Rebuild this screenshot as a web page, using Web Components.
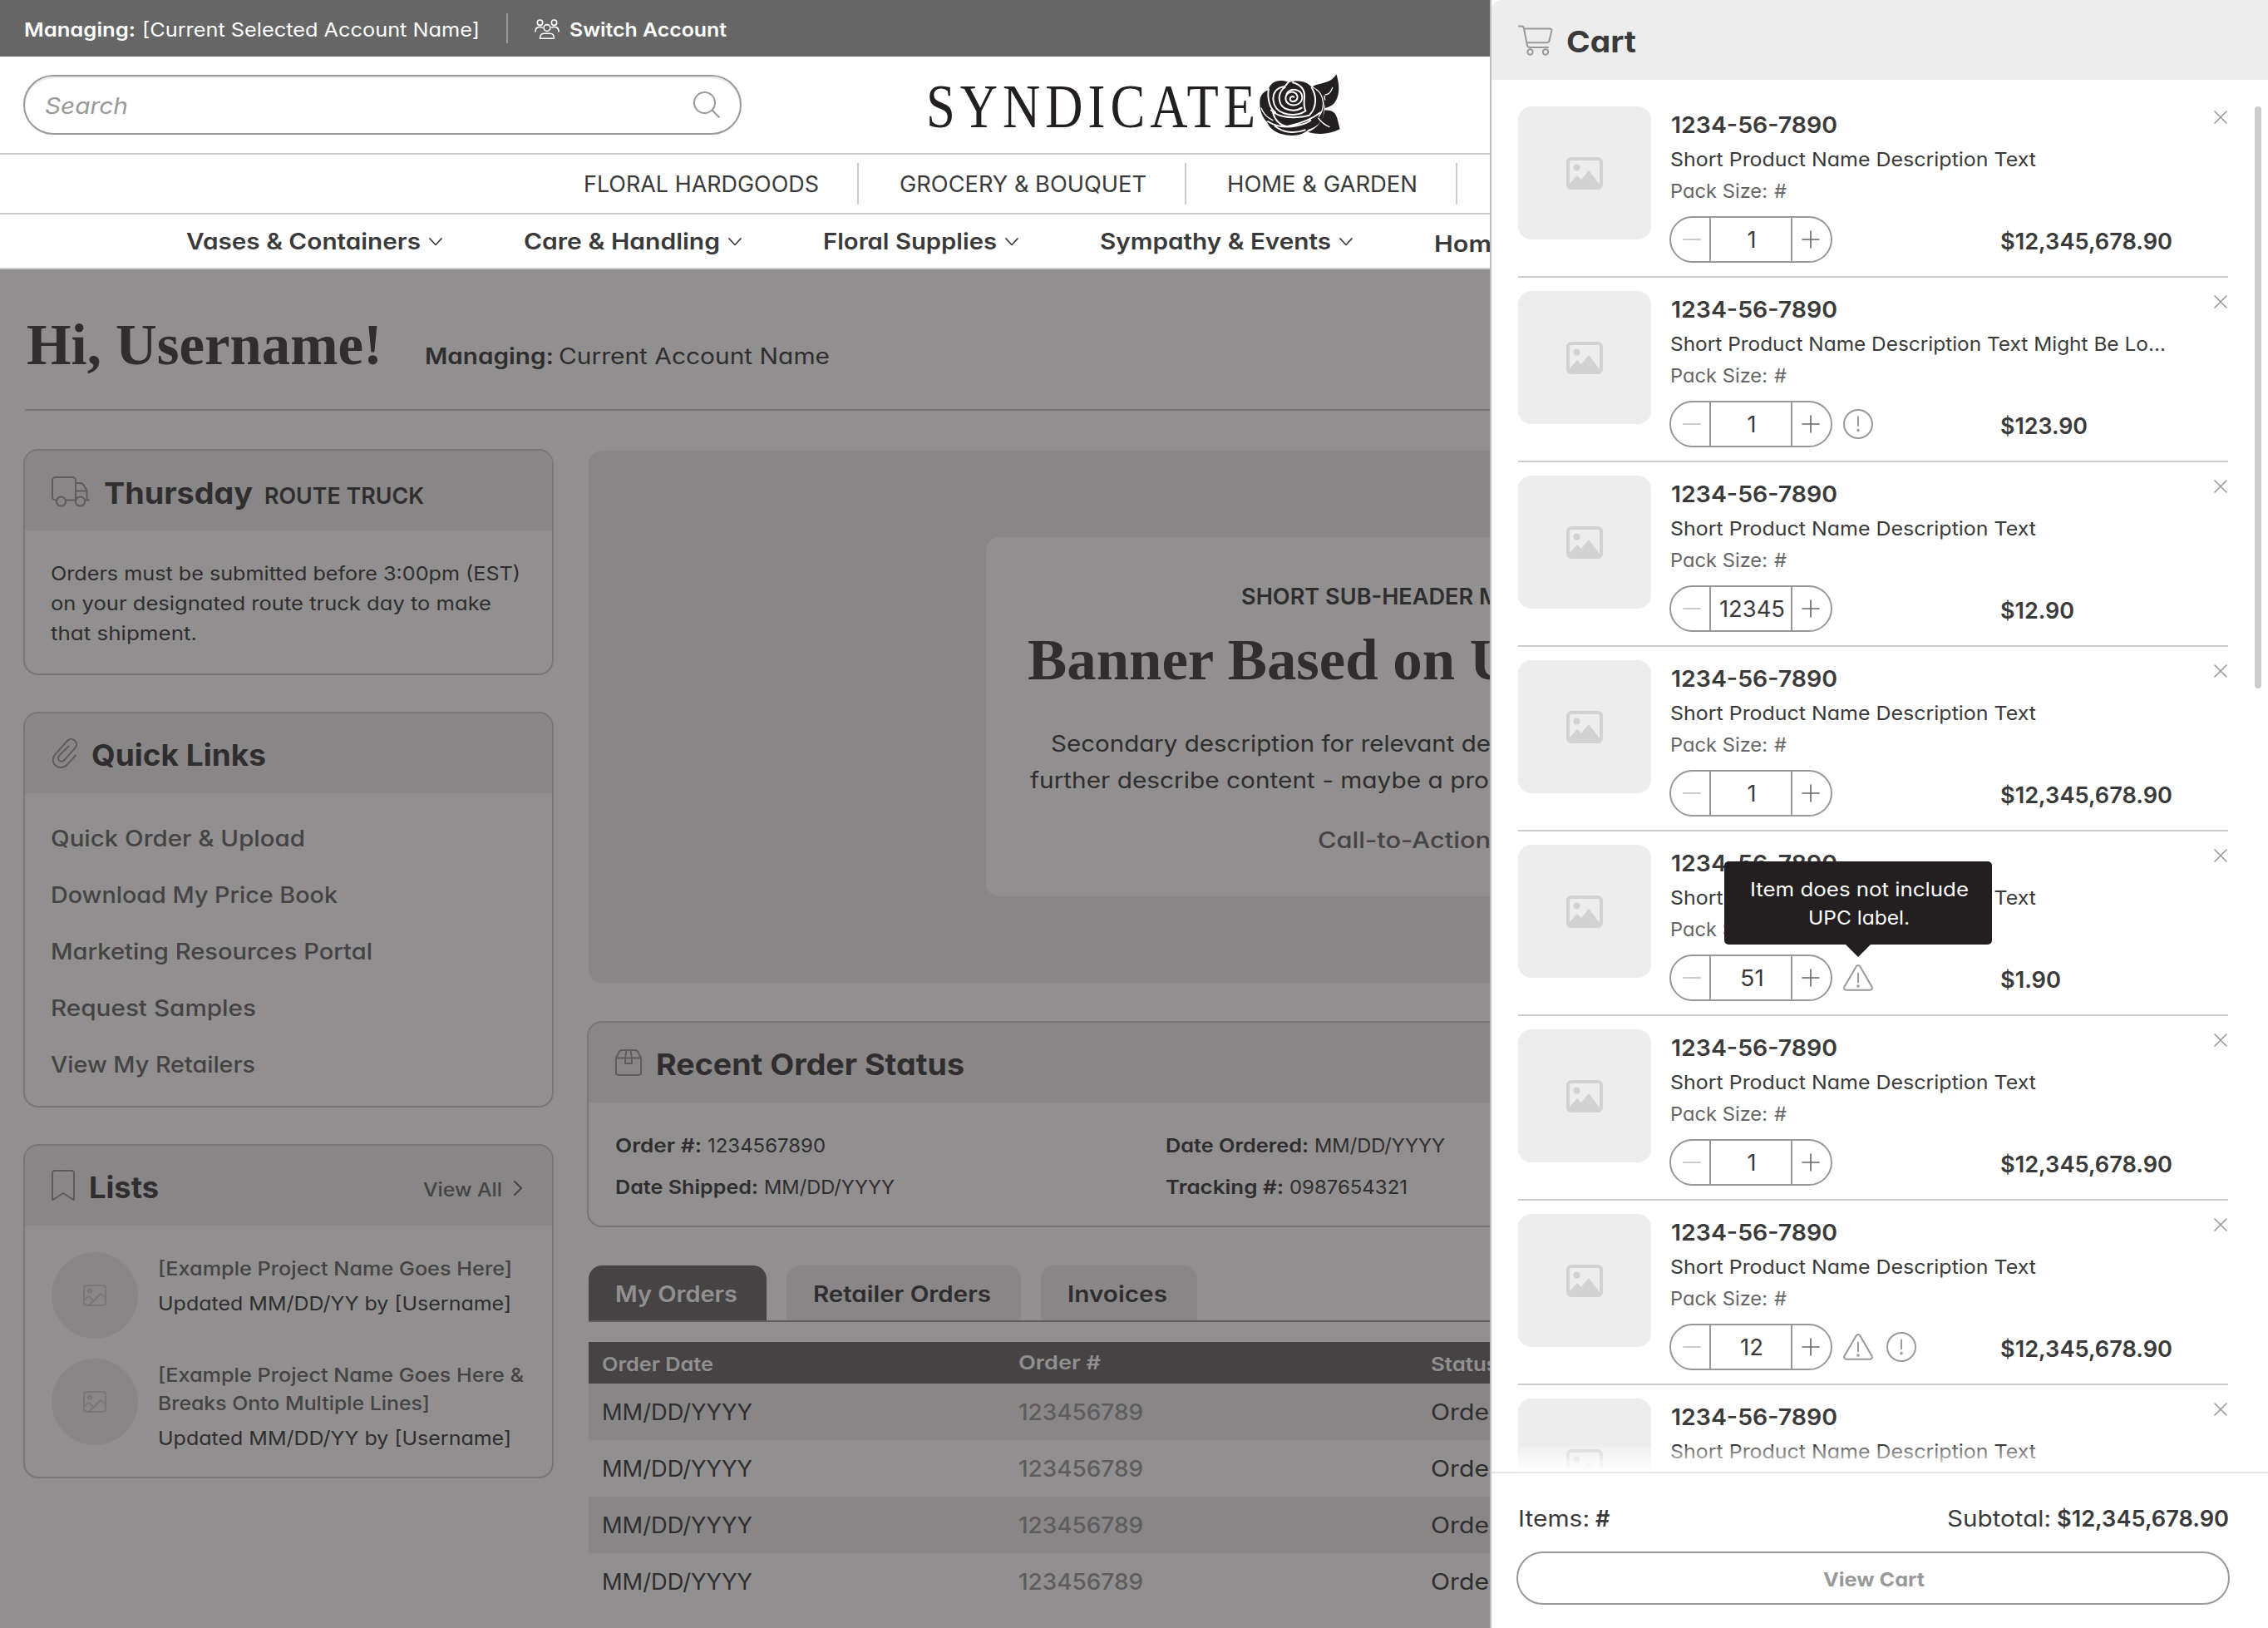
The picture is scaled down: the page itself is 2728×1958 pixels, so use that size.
<!DOCTYPE html>
<html lang="en">
<head>
  <meta charset="utf-8">
  <title>Syndicate - Dashboard</title>
  <style>
    body {
      margin: 0;
      width: 2728px;
      height: 1958px;
      overflow: hidden;
      position: relative;
      background: #fff;
      color: #3a3a3a;
      font-family: Inter, "Open Sans", "Liberation Sans", sans-serif;
      font-size: 27px;
      font-feature-settings: "cv11";
    }
  </style>
</head>
<body>
  <top-bar></top-bar>
  <site-header></site-header>
  <dash-board></dash-board>
  <cart-drawer></cart-drawer>

  <script>
    const ICONS = {
      people: ['0 0 30 24', '<circle cx="6.5" cy="4.2" r="3.2"/><circle cx="23.5" cy="4.2" r="3.2"/><circle cx="15" cy="10.5" r="3.9"/><path d="M1 15c0-3.500 2.200-5.600 5.500-5.600 1 0 2 .2 2.700.600M29 15c0-3.500-2.200-5.600-5.500-5.600-1 0-2 .2-2.700.600M6.500 23.200c0-4 2-6 5-6h7c3 0 5 2 5 6z"/>'],
      search: ['0 0 32 32', '<circle cx="13.500" cy="13.500" r="12.500"/><path d="M22.500 22.500 31 31"/>'],
      down: ['0 0 18 11', '<path d="M1 1l8 8.500L17 1"/>'],
      right: ['0 0 10 18', '<path d="M1 1l8 8-8 8"/>'],
      close: ['0 0 16 16', '<path d="M1 1l14 14M15 1 1 15"/>'],
      plus: ['0 0 20 20', '<path d="M10 0v20M0 10h20"/>'],
      minus: ['0 0 20 20', '<path d="M0 10h20"/>'],
      truck: ['0 0 46 37', '<path d="M6.500 28.500H5a4 4 0 0 1-4-4V5a4 4 0 0 1 4-4h20a4 4 0 0 1 4 4v23.500M17 28.500h12.500M29 8h5.500c2 0 3.300 1 4.200 2.600L42.500 17v11.500M29 17.500h13.500M40 28.500h5"/><circle cx="11.500" cy="30" r="5.600"/><circle cx="34.500" cy="30" r="5.600"/>'],
      clip: ['0 0 31 36', '<path d="M29 20.500 19 31.500c-4 4.300-10 4.600-14 1.300s-4.500-9-1-13L18.500 3.500c2.600-2.800 6.500-3.300 9.300-1s3 6 .6 9L15.500 26c-1.600 1.900-4.200 2.200-6 .7s-2-4-.4-5.900L20.500 9.500"/>'],
      bookmark: ['0 0 28 38', '<path d="M4 1h20a3 3 0 0 1 3 3v32.500L14 28 1 36.500V4a3 3 0 0 1 3-3z"/>'],
      box: ['0 0 32 32', '<path d="M1 10.500 4.500 3.500C5.300 1.800 6.500 1 8 1h16c1.500 0 2.700.8 3.500 2.500l3.500 7V28a3 3 0 0 1-3 3H4a3 3 0 0 1-3-3zM1 10.500h30M13.500 1 12 10.500V17h8v-6.500L18.500 1"/>'],
      cart: ['0 0 42 38', '<path d="M1 2.500h3.500c1.500 0 2 .7 2.300 2L11 25.500c.4 1.800 1.300 2.500 3 2.500h22M7.500 5.500H38c2 0 2.700 1 2.300 2.700L37.500 20c-.4 1.600-1.300 2.300-3 2.300H10.500"/><circle cx="14.500" cy="33.500" r="3.200"/><circle cx="33" cy="33.500" r="3.200"/>'],
      picture: ['0 0 28 26', '<rect x="1" y="1" width="26" height="24" rx="3"/><circle cx="8" cy="7.500" r="2"/><path d="M1 19l5.500-5 6 5M7 25l14-14 6 5.500"/>'],
      thumb: ['0 0 44 39', '<g stroke="none" fill="currentColor"><path fill-rule="evenodd" d="M6 0h32a6 6 0 0 1 6 6v27a6 6 0 0 1-6 6H6a6 6 0 0 1-6-6V6a6 6 0 0 1 6-6zm0 4a2 2 0 0 0-2 2v26l9-10 5 5 9-11 13 17V6a2 2 0 0 0-2-2z"/><circle cx="12.500" cy="12.500" r="4"/></g>'],
      circle: ['0 0 36 36', '<circle cx="18" cy="18" r="17"/><path d="M18 9.500V20"/><circle cx="18" cy="25.500" r=".8"/>'],
      triangle: ['0 0 36 32', '<path d="M15.800 2.300c1-1.700 3.400-1.700 4.400 0l14.300 24.400c1.100 2-.1 4-2.300 4H3.800c-2.200 0-3.400-2-2.300-4z"/><path d="M18 10.500v11"/><circle cx="18" cy="26" r=".8"/>']
    };

    class UiIcon extends HTMLElement {
      connectedCallback() {
        const [box, shape] = ICONS[this.getAttribute('name')];
        const size = box.split(' ');
        const w = this.getAttribute('w') || size[2];
        this.attachShadow({ mode: 'open' }).innerHTML = `
          <style>
            :host { display: block; flex: none; width: ${w}px; color: #999; }
            svg { display: block; width: 100%; overflow: visible; }
          </style>
          <svg viewBox="${box}" fill="none" stroke="currentColor" stroke-width="${this.getAttribute('stroke') || 2}"
            stroke-linecap="round" stroke-linejoin="round">${shape}</svg>`;
      }
    }

    // One line of text, stretched so that it takes up "w" pixels
    class FitText extends HTMLElement {
      connectedCallback() {
        this.attachShadow({ mode: 'open' }).innerHTML = `
          <style>
            :host { display: block; flex: none; white-space: nowrap; }
            span { display: inline-block; transform-origin: 0 50%; }
          </style>
          <span><slot></slot></span>`;
        const span = this.shadowRoot.querySelector('span');
        const target = Number(this.getAttribute('w')) + 3;
        const natural = span.getBoundingClientRect().width;
        const scale = this.textContent.length > 1 ? target / natural : 1;
        span.style.transform = `translate(1px, 1px) scaleX(${scale})`;
        this.style.width = (scale === 1 ? natural : target) + 'px';
      }
    }

    class TopBar extends HTMLElement {
      constructor() {
        super();
        this.attachShadow({ mode: 'open' }).innerHTML = `
          <style>
            :host {
              display: flex;
              align-items: center;
              height: 68px;
              padding-left: 28px;
              background: #666;
              color: #fff;
              font-size: 23.5px;
              line-height: 36px;
            }
            fit-text { margin-top: 2px; }
            .bold { font-weight: 600; }
            .current { margin-left: 8px; }
            i { width: 2px; height: 36px; margin: 0 32px 0 33px; background: #999; }
            ui-icon { color: #fff; margin: 2px 11px 0 0; }
          </style>
          <fit-text class="bold" w="131">Managing:</fit-text>
          <fit-text class="current" w="403">[Current Selected Account Name]</fit-text>
          <i></i>
          <ui-icon name="people" stroke="1.6"></ui-icon>
          <fit-text class="bold" w="186">Switch Account</fit-text>`;
      }
    }

    class SearchBox extends HTMLElement {
      constructor() {
        super();
        this.attachShadow({ mode: 'open' }).innerHTML = `
          <style>
            :host {
              box-sizing: border-box;
              display: flex;
              align-items: center;
              justify-content: space-between;
              width: 864px;
              height: 72px;
              padding: 0 24px 0 23px;
              border: 2px solid #999;
              border-radius: 36px;
              box-shadow: inset 0 2px 2px rgba(0, 0, 0, .1);
              color: #999;
              font-style: italic;
            }
          </style>
          <fit-text w="97">Search</fit-text>
          <ui-icon name="search"></ui-icon>`;
      }
    }

    class BrandLogo extends HTMLElement {
      constructor() {
        super();
        this.attachShadow({ mode: 'open' }).innerHTML = `
          <style>
            :host { display: flex; color: #231f20; }
            fit-text { font: 73px/96px "Liberation Serif", serif; letter-spacing: 7px; }
            svg { display: block; width: 120px; height: 90px; margin-left: -10px; }
          </style>
          <fit-text w="399">SYNDICATE</fit-text>
          <svg viewBox="0 0 360 270">
            <g fill="currentColor">
              <path d="M222 72c20-14 66-8 85-45 11 34 14 72-3 99-8 13-20 20-37 24-4-30-16-60-45-78z"/>
              <path d="M264 158c27-3 42 9 47 32l9 36c-38 20-80 20-115 11 36-17 55-43 59-79z"/>
              <path d="M31 130c0-25 12-39 31-45 6-28 35-43 74-28 31-10 68-4 83 19 38 12 50 50 42 90 0 34-28 55-56 62-20 22-60 26-97 15-26-8-45-24-50-42-19-17-27-42-27-71z"/>
            </g>
            <g fill="none" stroke="#fff" stroke-width="6" stroke-linecap="round">
              <path d="M63 82c-5 26 0 66 24 84M136 55c-10 8-8 14-18 18-28 4-42 24-38 50 3 24 16 38 36 45 28 10 62 7 80-8"/>
              <path d="M122 75c-20 12-26 38-16 60 12 24 54 30 76 14M150 58c30 8 44 26 42 54-2 16-4 30 4 48M128 98c14-24 54-18 56 12 1 22-24 36-46 26-20-10-18-38 4-44 16-2 28 10 24 24-4 12-24 14-26 2 0-8 8-12 14-8"/>
              <path d="M218 76c18 30 20 70-8 100-24 8-64 10-94 4-20-4-34-12-44-22M78 164c8 34 30 50 52 52 40-8 84-22 120-50M60 198c30 20 64 24 104 16 20-6 40-8 50-20"/>
              <path d="M234 82c30 22 34 66 10 98M268 102c12-2 20-8 25-26M266 120l-2-14M242 186c10 14 22 24 40 32M36 150c8 20 20 34 42 44" stroke-width="4"/>
              <path d="M86 215c30 24 70 28 108 14"/>
            </g>
          </svg>`;
      }
    }

    class SiteHeader extends HTMLElement {
      constructor() {
        super();
        const menu = [['Vases &amp; Containers', 279], ['Care &amp; Handling', 233], ['Floral Supplies', 206], ['Sympathy &amp; Events', 275]];
        this.attachShadow({ mode: 'open' }).innerHTML = `
          <style>
            :host { display: block; height: 256px; }
            .row { box-sizing: border-box; display: flex; border-bottom: 2px solid #ccc; overflow: hidden; }
            .brand { height: 118px; padding: 22px 0 0 28px; }
            brand-logo { margin: -10px 0 0 221px; }
            .links { height: 72px; align-items: center; padding-left: 701px; line-height: 70px; }
            .links i { width: 2px; height: 50px; margin: 0 48px 0 47px; background: #ccc; }
            .menu { height: 66px; padding-left: 223px; gap: 97px; line-height: 70px; font-weight: 600; }
            .menu div { display: flex; align-items: center; gap: 11px; }
            .menu ui-icon { color: #3a3a3a; margin-top: 2px; }
          </style>
          <div class="row brand"><search-box></search-box><brand-logo></brand-logo></div>
          <div class="row links">
            <fit-text w="280">FLORAL HARDGOODS</fit-text><i></i>
            <fit-text w="294">GROCERY &amp; BOUQUET</fit-text><i></i>
            <fit-text w="226">HOME &amp; GARDEN</fit-text><i></i>
          </div>
          <div class="row menu">
            ${menu.map(([name, w]) => `<div><fit-text w="${w}">${name}</fit-text><ui-icon name="down" w="16" stroke="1.8"></ui-icon></div>`).join('')}
            <fit-text w="66">Hom</fit-text>
          </div>`;
      }
    }

    class InfoCard extends HTMLElement {
      constructor() {
        super();
        this.attachShadow({ mode: 'open' }).innerHTML = `
          <style>
            :host {
              box-sizing: border-box;
              display: block;
              border: 2px solid #ccc;
              border-radius: 18px;
              overflow: hidden;
            }
            header {
              box-sizing: border-box;
              display: flex;
              align-items: center;
              height: 96px;
              padding: var(--shift, 3px) 34px 0 32px;
              background: #ededed;
              font-size: 35.5px;
              font-weight: 700;
              line-height: 50px;
            }
            ui-icon { margin: 0 16px 4px 0; }
          </style>
          <header>
            <ui-icon name="${this.getAttribute('icon')}"></ui-icon>
            <slot name="title"></slot>
          </header>
          <slot></slot>`;
      }
    }

    class ListEntry extends HTMLElement {
      constructor() {
        super();
        this.attachShadow({ mode: 'open' }).innerHTML = `
          <style>
            :host { display: flex; height: 104px; gap: 23px; font-size: 23.5px; line-height: 34px; }
            .pic {
              display: flex;
              flex: none;
              align-items: center;
              justify-content: center;
              width: 104px;
              height: 104px;
              border-radius: 50%;
              background: #ededed;
            }
            .pic ui-icon { color: #ccc; }
            .name { padding-top: 2px; margin-bottom: 8px; color: #666; font-weight: 500; }
          </style>
          <div class="pic"><ui-icon name="picture"></ui-icon></div>
          <div>
            <div class="name"><slot></slot></div>
            <fit-text w="422">Updated MM/DD/YY by [Username]</fit-text>
          </div>`;
      }
    }

    class OrderTable extends HTMLElement {
      constructor() {
        super();
        const row = `<div class="row">
            <fit-text w="178">MM/DD/YYYY</fit-text>
            <fit-text class="num" w="147">123456789</fit-text>
            <fit-text w="67">Orde</fit-text>
          </div>`;
        this.attachShadow({ mode: 'open' }).innerHTML = `
          <style>
            :host { display: block; }
            .row, .head { display: grid; grid-template-columns: 501px 496px 1fr; padding-left: 15px; line-height: 68px; }
            .head { height: 50px; line-height: 52px; background: #666; color: #fff; font-size: 23.5px; font-weight: 600; }
            .head .up { line-height: 48px; }
            .row:nth-child(odd) { background: #ededed; }
            .num { color: #999; font-weight: 500; }
          </style>
          <div class="head">
            <fit-text w="131">Order Date</fit-text>
            <fit-text class="up" w="96">Order #</fit-text>
            <fit-text w="78">Status</fit-text>
          </div>
          ${row.repeat(4)}`;
      }
    }

    class DashBoard extends HTMLElement {
      constructor() {
        super();
        this.attachShadow({ mode: 'open' }).innerHTML = `
          <style>
            :host { box-sizing: border-box; display: block; position: relative; height: 1634px; padding-left: 28px; }
            .greeting {
              box-sizing: border-box;
              display: flex;
              align-items: baseline;
              height: 170px;
              padding: 13px 0 0 1px;
              margin-left: 2px;
              border-bottom: 2px solid #ccc;
              line-height: 40px;
            }
            .greeting .hi { font: bold 69px/154px "Liberation Serif", serif; margin-right: 51px; }
            .semi { font-weight: 600; }
            .medium { font-weight: 500; }
            .columns { display: grid; grid-template-columns: 638px 1994px; gap: 40px; padding-top: 46px; }
            .left { display: flex; flex-direction: column; gap: 44px; }
            .route { height: 272px; --shift: 6px; }
            .route p { margin: 33px 0 0 30px; font-size: 23.5px; line-height: 36px; }
            .sub { font-size: 27px; margin: 5px 0 0 14px; }
            .quick { height: 476px; }
            .quick div { padding: 20px 0 0 30px; color: #666; font-weight: 500; line-height: 68px; }
            .lists { height: 402px; }
            .lists .all { margin-left: auto; font-size: 23.5px; font-weight: 500; color: #666; padding-top: 4px; }
            .lists .go { color: #666; margin: 2px 2px 0 15px; }
            .entries { display: flex; flex-direction: column; gap: 24px; padding: 32px 0 0 32px; }
            .banner {
              box-sizing: border-box;
              height: 640px;
              margin: 2px 0 46px 2px;
              padding: 104px 0 0 478px;
              border-radius: 16px;
              background: #ededed;
            }
            .panel { box-sizing: border-box; width: 1036px; height: 432px; padding-top: 50px; border-radius: 16px; background: #fff; line-height: 44px; }
            .panel .title { font: bold 69px/90px "Liberation Serif", serif; margin: 9px 0 34px 49px; }
            .panel .cta { margin: 28px 0 0 398px; color: #666; font-weight: 500; }
            .status { height: 248px; }
            .facts { display: grid; grid-template-columns: 662px 1fr; padding: 26px 0 0 31px; font-size: 23.5px; line-height: 50px; }
            .facts div { display: flex; gap: 7px; }
            .tabs { display: flex; gap: 24px; margin: 46px 0 24px 2px; border-bottom: 2px solid #999; font-weight: 600; line-height: 68px; }
            .tabs div { box-sizing: border-box; height: 66px; padding-left: 31px; border-radius: 16px 16px 0 0; background: #ededed; }
            .tabs .on { background: #666; color: #fff; }
            order-table { margin-left: 2px; }
            .shade { position: absolute; inset: 0; background: rgba(35, 31, 32, .5); }
          </style>
          <div class="greeting">
            <fit-text class="hi" w="425">Hi, Username!</fit-text>
            <fit-text class="semi" w="152">Managing:</fit-text>
            <fit-text style="margin-left:6px" w="323">Current Account Name</fit-text>
          </div>
          <div class="columns">
            <div class="left">
              <info-card class="route" icon="truck">
                <fit-text slot="title" w="176">Thursday</fit-text>
                <fit-text slot="title" class="sub semi" w="189">ROUTE TRUCK</fit-text>
                <p>
                  <fit-text w="562">Orders must be submitted before 3:00pm (EST)</fit-text>
                  <fit-text w="527">on your designated route truck day to make</fit-text>
                  <fit-text w="173">that shipment.</fit-text>
                </p>
              </info-card>
              <info-card class="quick" icon="clip">
                <fit-text slot="title" w="207">Quick Links</fit-text>
                <div>
                  <fit-text w="303">Quick Order &amp; Upload</fit-text>
                  <fit-text w="342">Download My Price Book</fit-text>
                  <fit-text w="384">Marketing Resources Portal</fit-text>
                  <fit-text w="244">Request Samples</fit-text>
                  <fit-text w="243">View My Retailers</fit-text>
                </div>
              </info-card>
              <info-card class="lists" icon="bookmark">
                <fit-text slot="title" w="81">Lists</fit-text>
                <fit-text slot="title" class="all" w="92">View All</fit-text>
                <ui-icon slot="title" class="go" name="right"></ui-icon>
                <div class="entries">
                  <list-entry><fit-text w="423">[Example Project Name Goes Here]</fit-text></list-entry>
                  <list-entry>
                    <fit-text w="437">[Example Project Name Goes Here &amp;</fit-text>
                    <fit-text w="324">Breaks Onto Multiple Lines]</fit-text>
                  </list-entry>
                </div>
              </info-card>
            </div>
            <div class="right">
              <div class="banner">
                <div class="panel">
                  <fit-text class="semi" style="margin:-1px 0 0 306px" w="308">SHORT SUB-HEADER M</fit-text>
                  <fit-text class="title" w="580">Banner Based on U</fit-text>
                  <fit-text style="margin-left:77px" w="526">Secondary description for relevant de</fit-text>
                  <fit-text style="margin-left:52px" w="549">further describe content - maybe a pro</fit-text>
                  <fit-text class="cta" w="205">Call-to-Action</fit-text>
                </div>
              </div>
              <info-card class="status" icon="box">
                <fit-text slot="title" w="368">Recent Order Status</fit-text>
                <div class="facts">
                  <div><fit-text class="semi" w="101">Order #:</fit-text><fit-text w="139">1234567890</fit-text></div>
                  <div><fit-text class="semi" w="169">Date Ordered:</fit-text><fit-text w="154">MM/DD/YYYY</fit-text></div>
                  <div><fit-text class="semi" w="169">Date Shipped:</fit-text><fit-text w="154">MM/DD/YYYY</fit-text></div>
                  <div><fit-text class="semi" w="139">Tracking #:</fit-text><fit-text w="139">0987654321</fit-text></div>
                </div>
              </info-card>
              <div class="tabs">
                <div class="on" style="width:214px"><fit-text w="144">My Orders</fit-text></div>
                <div style="width:282px"><fit-text w="211">Retailer Orders</fit-text></div>
                <div style="width:188px"><fit-text w="117">Invoices</fit-text></div>
              </div>
              <order-table></order-table>
            </div>
          </div>
          <div class="shade"></div>`;
      }
    }

    class QtyStepper extends HTMLElement {
      connectedCallback() {
        this.attachShadow({ mode: 'open' }).innerHTML = `
          <style>
            :host {
              box-sizing: border-box;
              display: grid;
              grid-template-columns: 46px 1fr 46px;
              width: 196px;
              height: 56px;
              border: 2px solid #999;
              border-radius: 28px;
              line-height: 52px;
            }
            div { display: flex; align-items: center; justify-content: center; }
            .qty { border: solid #999; border-width: 0 2px; }
            .less { color: #ccc; padding-left: 3px; }
            .more { color: #666; padding-right: 2px; }
          </style>
          <div><ui-icon class="less" name="minus"></ui-icon></div>
          <div class="qty"><slot></slot></div>
          <div><ui-icon class="more" name="plus" stroke="1.6"></ui-icon></div>`;
      }
    }

    class ToolTip extends HTMLElement {
      constructor() {
        super();
        this.attachShadow({ mode: 'open' }).innerHTML = `
          <style>
            :host {
              box-sizing: border-box;
              display: flex;
              flex-direction: column;
              align-items: center;
              position: absolute;
              z-index: 2;
              left: -143px;
              bottom: 56px;
              width: 322px;
              height: 100px;
              padding-top: 16px;
              border-radius: 5px;
              background: #231f20;
              color: #fff;
              font-size: 23.5px;
              line-height: 34px;
            }
            :host::after {
              content: "";
              position: absolute;
              top: 99px;
              left: 145px;
              border: 16px solid transparent;
              border-top-color: #231f20;
              border-bottom: 0;
            }
          </style>
          <slot></slot>`;
      }
    }

    class CartItem extends HTMLElement {
      connectedCallback() {
        const get = (name) => this.getAttribute(name);
        const flags = (get('flags') || '').split(' ').filter(Boolean);
        const more = this.hasAttribute('long');
        this.attachShadow({ mode: 'open' }).innerHTML = `
          <style>
            :host {
              box-sizing: border-box;
              display: grid;
              grid-template-columns: 160px 1fr 16px;
              flex: none;
              gap: 22px;
              height: 222px;
              padding-top: 16px;
              border-bottom: 2px solid #ccc;
            }
            .pic { display: flex; align-items: center; justify-content: center; height: 160px; border-radius: 16px; background: #ededed; }
            .pic ui-icon { color: #d2d2d2; }
            .sku { margin-left: 1px; font-weight: 600; line-height: 44px; }
            .line { display: flex; gap: 8px; font-size: 23.5px; line-height: 38px; }
            .pack { color: #666; }
            .buy { display: flex; align-items: center; width: 397px; height: 56px; margin-top: 12px; }
            .flag { position: relative; margin-left: 13px; }
            .flag + .flag { margin-left: 16px; }
            .price { font-weight: 600; }
            .row { display: flex; align-items: center; }
            .row .price { margin-top: 14px; }
            .x { margin: 5px 0 0 -1px; }
          </style>
          <div class="pic"><ui-icon name="thumb"></ui-icon></div>
          <div>
            <fit-text class="sku" w="197">1234-56-7890</fit-text>
            <div class="line"><fit-text w="${more ? 593 : 437}">Short Product Name Description Text${more ? ' Might Be Lo...' : ''}</fit-text></div>
            <div class="line pack"><fit-text w="114">Pack Size:</fit-text><fit-text w="17">#</fit-text></div>
            <div class="row">
              <div class="buy">
                <qty-stepper><fit-text w="${get('qw')}">${get('qty')}</fit-text></qty-stepper>
                ${flags.map((flag) => `<div class="flag"><ui-icon name="${flag}"></ui-icon>${flag === 'triangle' ? '<slot></slot>' : ''}</div>`).join('')}
              </div>
              <fit-text class="price" w="${get('pw')}">${get('price')}</fit-text>
            </div>
          </div>
          <ui-icon class="x" name="close" stroke="1.600"></ui-icon>`;
      }
    }

    class CartDrawer extends HTMLElement {
      constructor() {
        super();
        const big = 'qty="1" qw="7" price="$12,345,678.90" pw="204"';
        this.attachShadow({ mode: 'open' }).innerHTML = `
          <style>
            :host {
              box-sizing: border-box;
              display: flex;
              flex-direction: column;
              position: absolute;
              top: 0;
              right: 0;
              width: 936px;
              height: 1958px;
              border-left: 2px solid #bfbfbf;
              background: #fff;
            }
            header {
              display: flex;
              flex: none;
              align-items: center;
              height: 96px;
              padding-left: 32px;
              border-top-left-radius: 12px;
              background: #ededed;
              font-size: 35.5px;
              font-weight: 700;
            }
            header fit-text { margin: 2px 0 0 15px; }
            .list {
              display: flex;
              flex-direction: column;
              position: relative;
              height: 1658px;
              padding: 16px 48px 0 32px;
              overflow: hidden;
            }
            .bar { position: absolute; top: 32px; right: 8px; width: 8px; height: 700px; border-radius: 4px; background: #ccc; }
            .fade { position: absolute; left: 0; right: 0; bottom: 0; height: 30px; background: linear-gradient(rgba(255, 255, 255, .2), #fff); }
            footer { box-sizing: border-box; flex: none; height: 188px; padding: 33px 46px 0 30px; border-top: 2px solid #e6e6e6; }
            .sum { display: flex; gap: 7px; padding: 1px 2px 0 1px; line-height: 40px; }
            .sum b { font-weight: 600; }
            .sub { margin-left: auto; }
            .view {
              box-sizing: border-box;
              display: flex;
              align-items: center;
              justify-content: center;
              height: 64px;
              margin-top: 20px;
              border: 2px solid #999;
              border-radius: 32px;
              color: #999;
              font-size: 23.5px;
              font-weight: 700;
            }
          </style>
          <header><ui-icon name="cart"></ui-icon><fit-text w="81">Cart</fit-text></header>
          <div class="list">
            <cart-item ${big}></cart-item>
            <cart-item long qty="1" qw="7" price="$123.90" pw="102" flags="circle"></cart-item>
            <cart-item qty="12345" qw="76" price="$12.90" pw="86"></cart-item>
            <cart-item ${big}></cart-item>
            <cart-item qty="51" qw="26" price="$1.90" pw="70" flags="triangle">
              <tool-tip>
                <fit-text w="260">Item does not include</fit-text>
                <fit-text w="119">UPC label.</fit-text>
              </tool-tip>
            </cart-item>
            <cart-item ${big}></cart-item>
            <cart-item qty="12" qw="25" price="$12,345,678.90" pw="204" flags="triangle circle"></cart-item>
            <cart-item ${big}></cart-item>
            <div class="bar"></div>
            <div class="fade"></div>
          </div>
          <footer>
            <div class="sum">
              <fit-text w="83">Items:</fit-text><fit-text w="22"><b>#</b></fit-text>
              <fit-text class="sub" w="122">Subtotal:</fit-text><fit-text w="204"><b>$12,345,678.90</b></fit-text>
            </div>
            <div class="view"><fit-text w="119">View Cart</fit-text></div>
          </footer>`;
      }
    }

    customElements.define('ui-icon', UiIcon);
    customElements.define('top-bar', TopBar);
    customElements.define('search-box', SearchBox);
    customElements.define('brand-logo', BrandLogo);
    customElements.define('site-header', SiteHeader);
    customElements.define('info-card', InfoCard);
    customElements.define('list-entry', ListEntry);
    customElements.define('order-table', OrderTable);
    customElements.define('dash-board', DashBoard);
    customElements.define('qty-stepper', QtyStepper);
    customElements.define('tool-tip', ToolTip);
    customElements.define('cart-item', CartItem);
    customElements.define('cart-drawer', CartDrawer);
    // Last, so that every line is measured in its final font
    customElements.define('fit-text', FitText);
  </script>
</body>
</html>
